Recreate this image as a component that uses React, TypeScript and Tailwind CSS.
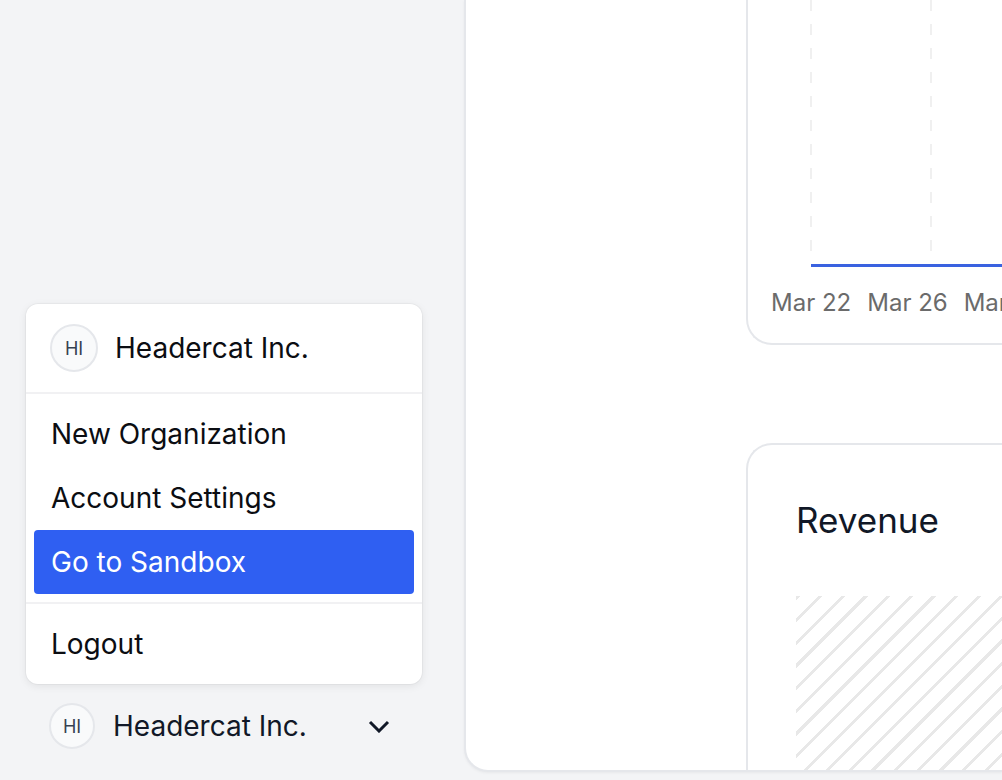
function Avatar({ size }: { size: string }) {
  return (
    <div
      className={`${size} flex shrink-0 items-center justify-center rounded-full border-2 border-[#e5e7eb] bg-[#f9fafb] text-[18px] text-[#374151]`}
    >
      HI
    </div>
  );
}

function OrgMenu() {
  const items = ["New Organization", "Account Settings", "Go to Sandbox"];
  return (
    <div className="w-[396px] rounded-[12px] bg-white shadow-[0_0_0_1px_rgba(0,0,0,0.03),0_2px_8px_rgba(0,0,0,0.08)]">
      <div className="flex h-[88px] items-center gap-[17px] px-[24px]">
        <Avatar size="h-[48px] w-[48px]" />
        <span className="text-[28px] text-[#0b0d12]">Headercat Inc.</span>
      </div>
      <div className="h-[2px] bg-[#f1f1f3]" />
      <div className="p-[8px]">
        {items.map((label) => (
          <div
            key={label}
            className={`flex h-[64px] items-center rounded-[4px] px-[17px] text-[28px] ${
              label === "Go to Sandbox" ? "bg-[#2f5ff2] text-white" : "text-[#0b0d12]"
            }`}
          >
            {label}
          </div>
        ))}
      </div>
      <div className="h-[2px] bg-[#f1f1f3]" />
      <div className="p-[8px]">
        <div className="flex h-[64px] items-center px-[17px] text-[28px] text-[#0b0d12]">Logout</div>
      </div>
    </div>
  );
}

export default function App() {
  return (
    <div className="flex h-[780px] w-[1002px] overflow-hidden bg-[#f3f4f6] font-['Inter',sans-serif]">
      <aside className="flex w-[464px] shrink-0 flex-col justify-end px-[26px] pb-[22px]">
        <OrgMenu />
        <div className="mt-[10px] flex h-[64px] w-[396px] items-center pl-[23px] pr-[32px]">
          <Avatar size="h-[46px] w-[46px]" />
          <span className="ml-[18px] flex-1 text-[28px] text-[#111827]">Headercat Inc.</span>
          <svg width="22" height="14" viewBox="0 0 22 14" fill="none">
            <path d="M2 3l9 9 9-9" stroke="#111827" strokeWidth="3" />
          </svg>
        </div>
      </aside>

      <main className="h-[772px] flex-1 overflow-hidden rounded-bl-[24px] border-b-2 border-l-2 border-[#e5e7eb] bg-white pl-[280px] shadow-[0_1px_3px_rgba(0,0,0,0.05)]">
        <div className="h-[345px] w-[400px] rounded-bl-[26px] border-b-2 border-l-2 border-[#e5e7eb]">
          <svg width="400" height="268" className="block">
            <line x1="63" y1="0" x2="63" y2="262" stroke="#f0f0f0" strokeWidth="2" strokeDasharray="11 13" />
            <line x1="183" y1="0" x2="183" y2="262" stroke="#f0f0f0" strokeWidth="2" strokeDasharray="11 13" />
            <line x1="63" y1="265.5" x2="400" y2="265.5" stroke="#3a62e0" strokeWidth="3" />
          </svg>
          <div className="mt-[23px] flex gap-[16px] pl-[23px] text-[24px] leading-[24px] whitespace-nowrap text-[#6b6b6b]">
            <span>Mar 22</span>
            <span>Mar 26</span>
            <span>Mar 30</span>
          </div>
        </div>

        <div className="mt-[98px] h-[500px] w-[400px] rounded-tl-[26px] border-l-2 border-t-2 border-[#e5e7eb] pl-[48px] pt-[53px]">
          <h2 className="text-[35px] leading-[44px] text-[#111827]">Revenue</h2>
          <div className="mt-[54px] h-[300px] bg-[repeating-linear-gradient(135deg,#e8e8e8_0_3px,transparent_3px_16px)]" />
        </div>
      </main>
    </div>
  );
}
